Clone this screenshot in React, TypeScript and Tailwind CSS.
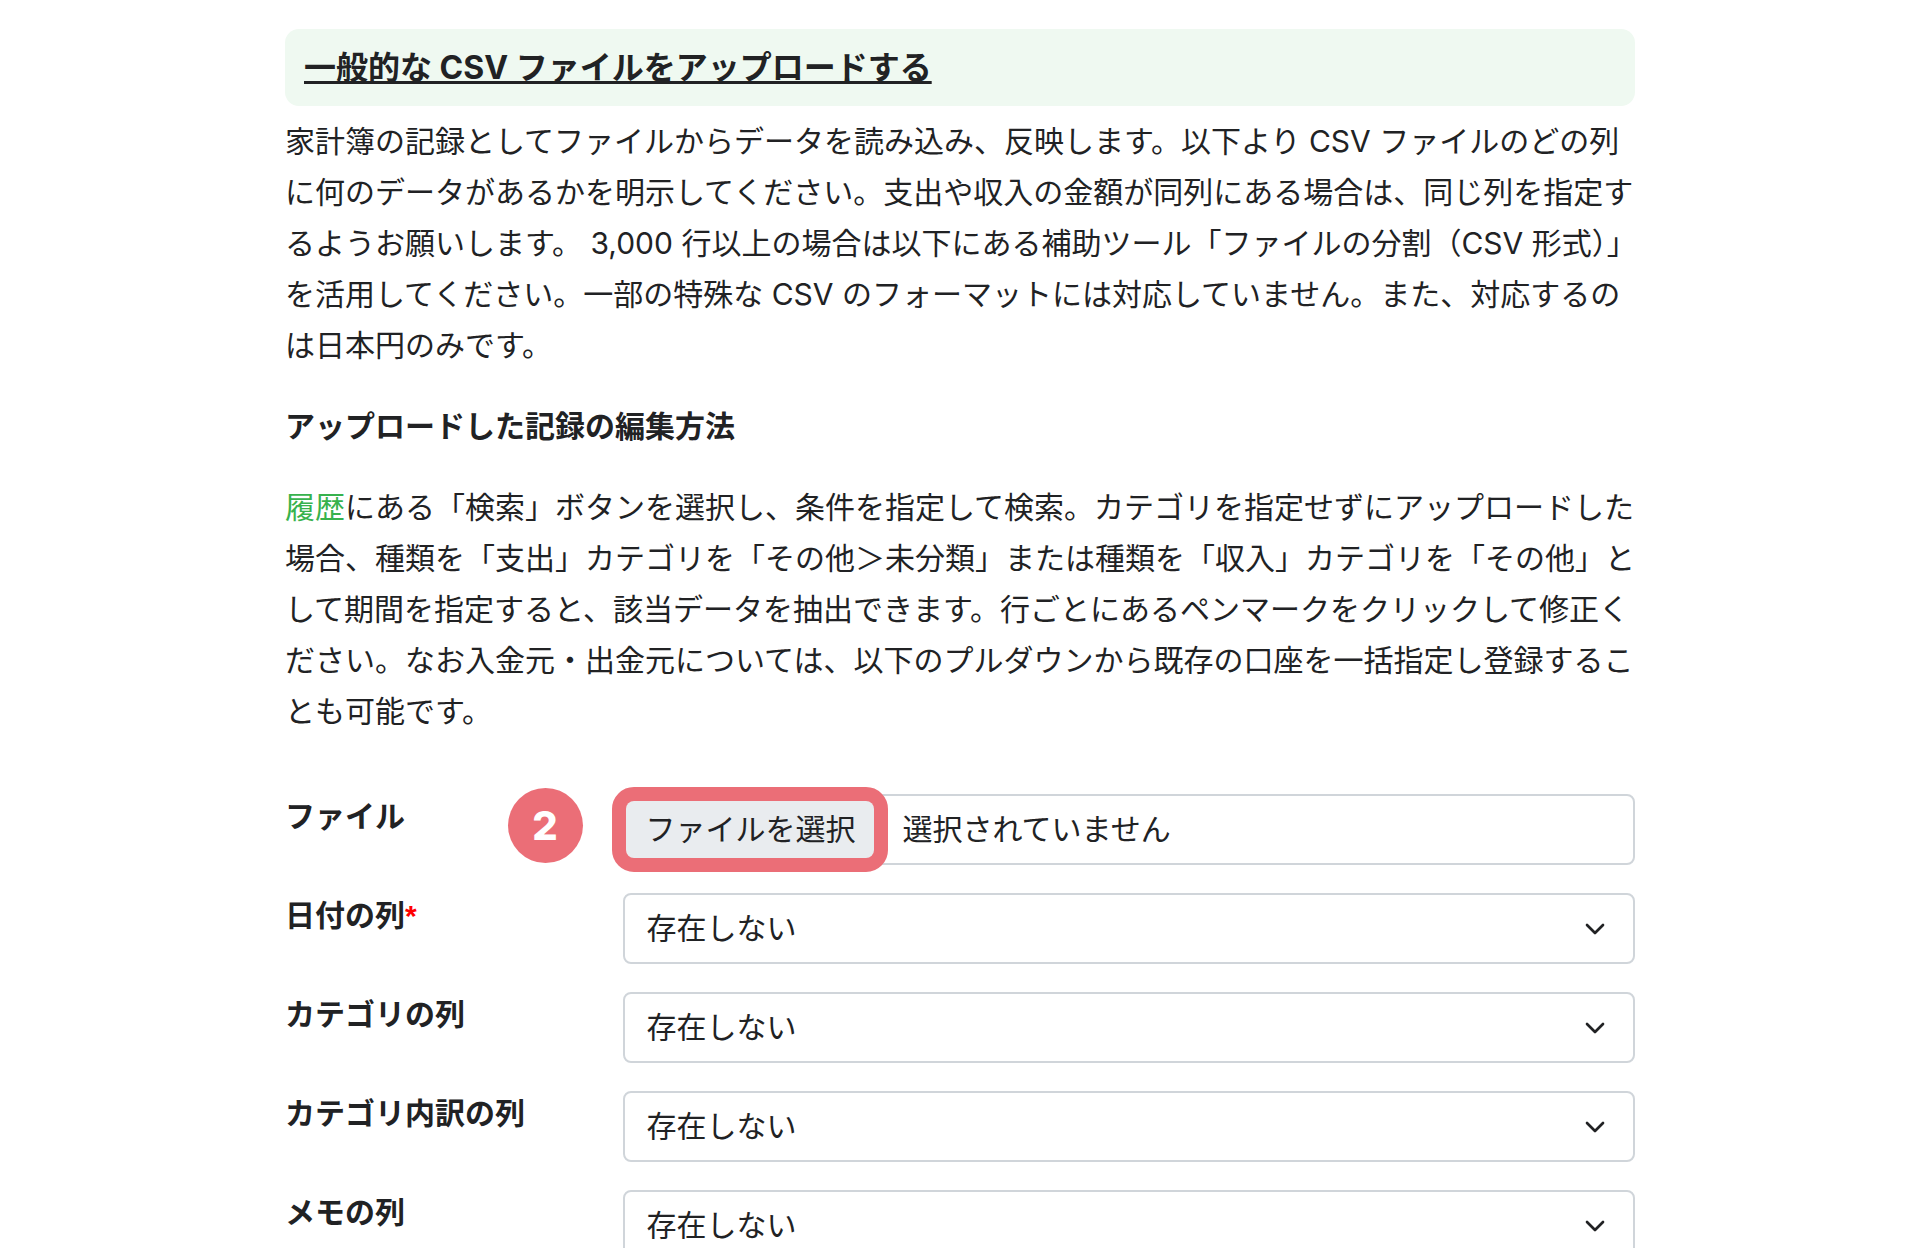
import { useRef, useState } from "react";
import { ChevronDown } from "lucide-react";

const columns = [
  { id: "date", label: "日付の列", required: true },
  { id: "category", label: "カテゴリの列", required: false },
  { id: "subcategory", label: "カテゴリ内訳の列", required: false },
  { id: "memo", label: "メモの列", required: false },
];

function FileRow() {
  const inputRef = useRef<HTMLInputElement>(null);
  const [fileName, setFileName] = useState("");

  return (
    <div className="grid grid-cols-4">
      <label htmlFor="csv-file" className="font-bold leading-11">
        ファイル
      </label>
      <div className="relative col-span-3 flex h-[71px] items-center rounded-lg border-2 border-[#d0d5da] bg-white">
        <span className="absolute -left-[117px] -top-2 flex size-[75px] items-center justify-center rounded-full bg-[#eb6e77] text-[40px] font-extrabold leading-none text-white">
          2
        </span>
        <input
          ref={inputRef}
          id="csv-file"
          type="file"
          accept=".csv"
          className="sr-only"
          onChange={(e) => setFileName(e.target.files?.[0]?.name ?? "")}
        />
        <button
          type="button"
          onClick={() => inputRef.current?.click()}
          className="-ml-[13px] h-[85px] shrink-0 rounded-[22px] border-14 border-[#eb6e77] bg-[#eb6e77]"
        >
          <span className="flex h-full items-center rounded-lg bg-[#e9ecef] pl-5 pr-[18px]">
            ファイルを選択
          </span>
        </button>
        <span className="ml-[15px] truncate">
          {fileName || "選択されていません"}
        </span>
      </div>
    </div>
  );
}

function ColumnRow({
  id,
  label,
  required,
}: {
  id: string;
  label: string;
  required: boolean;
}) {
  return (
    <div className="grid grid-cols-4">
      <label htmlFor={id} className="font-bold leading-11">
        {label}
        {required && (
          <span className="font-['Liberation_Sans',sans-serif] text-[#ff0000]">
            *
          </span>
        )}
      </label>
      <div className="relative col-span-3">
        <select
          id={id}
          className="h-[71px] w-full appearance-none rounded-lg border-2 border-[#d0d5da] bg-white px-[22px]"
        >
          <option>存在しない</option>
        </select>
        <ChevronDown
          className="pointer-events-none absolute right-6 top-5 size-8"
          strokeWidth={2}
        />
      </div>
    </div>
  );
}

export default function App() {
  return (
    <main
      lang="ja"
      className="h-screen overflow-hidden bg-white px-4 pt-[29px] font-['Inter','Noto_Sans_CJK_JP',sans-serif] text-[30px] leading-[51px] text-[#212224]"
    >
      <div className="mx-auto max-w-[1350px]">
        <h1 className="rounded-[14px] bg-[#eff9f1] px-[19px] py-[13px] text-[32px] font-bold underline decoration-3 underline-offset-2 [text-decoration-skip-ink:none]">
          一般的な CSV ファイルをアップロードする
        </h1>
        <p className="mt-[10px]">
          家計簿の記録としてファイルからデータを読み込み、反映します。以下より CSV
          ファイルのどの列に何のデータがあるかを明示してください。支出や収入の金額が同列にある場合は、同じ列を指定するようお願いします。
          3,000 行以上の場合は以下にある補助ツール「ファイルの分割（CSV
          形式）」を活用してください。一部の特殊な CSV
          のフォーマットには対応していません。また、対応するのは日本円のみです。
        </p>
        <h2 className="mt-[30px] font-bold">アップロードした記録の編集方法</h2>
        <p className="mt-[30px]">
          <a href="#history" className="text-[#37b24d]">
            履歴
          </a>
          にある「検索」ボタンを選択し、条件を指定して検索。カテゴリを指定せずにアップロードした場合、種類を「支出」カテゴリを「その他＞未分類」または種類を「収入」カテゴリを「その他」として期間を指定すると、該当データを抽出できます。行ごとにあるペンマークをクリックして修正ください。なお入金元・出金元については、以下のプルダウンから既存の口座を一括指定し登録することも可能です。
        </p>
        <form className="mt-[57px] flex flex-col gap-7">
          <FileRow />
          {columns.map((column) => (
            <ColumnRow key={column.id} {...column} />
          ))}
        </form>
      </div>
    </main>
  );
}
